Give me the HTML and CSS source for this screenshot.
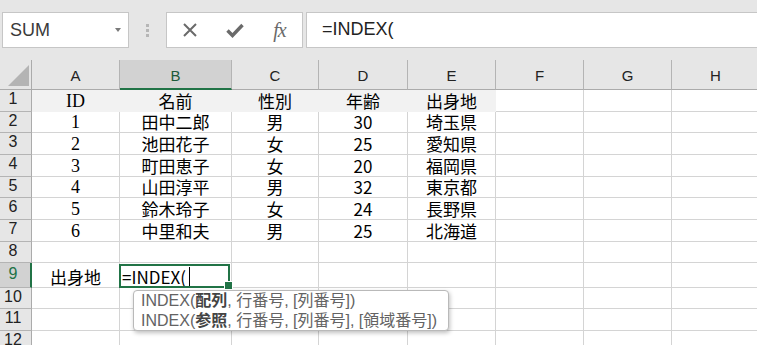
FILE: index.html
```html
<!DOCTYPE html>
<html lang="ja">
<head>
<meta charset="utf-8">
<link rel="stylesheet" href="styles.css">
</head>
<body>
<div class="toolbar">
  <div class="namebox"><span class="nb-text">SUM</span><span class="caret"></span></div>
  <div class="grip"><i></i><i></i><i></i></div>
  <div class="fbtns">
    <span class="fb"><svg width="16" height="16" viewBox="0 0 16 16"><path d="M2 2L14 14M14 2L2 14" stroke="#6a6a6a" stroke-width="2" fill="none"/></svg></span>
    <span class="fb"><svg width="18" height="16" viewBox="0 0 18 16"><path d="M1.5 8.5L6.5 13.5L16.5 3" stroke="#6a6a6a" stroke-width="3.4" fill="none"/></svg></span>
    <span class="fb fx">fx</span>
  </div>
  <div class="finput">=INDEX(</div>
</div>
<div class="sheet">
  <div class="corner"><svg width="32" height="30" viewBox="0 0 32 30"><path d="M29 5L29 26L8 26Z" fill="#b4b4b4"/></svg></div>
  <div class="ch">A</div><div class="ch sel">B</div><div class="ch">C</div><div class="ch">D</div><div class="ch">E</div><div class="ch">F</div><div class="ch">G</div><div class="ch">H</div>

  <div class="rh">1</div><div class="c hd lat">ID</div><div class="c hd">名前</div><div class="c hd">性別</div><div class="c hd">年齢</div><div class="c hd">出身地</div><div class="c"></div><div class="c"></div><div class="c"></div>
  <div class="rh">2</div><div class="c lat">1</div><div class="c">田中二郎</div><div class="c">男</div><div class="c">30</div><div class="c">埼玉県</div><div class="c"></div><div class="c"></div><div class="c"></div>
  <div class="rh">3</div><div class="c lat">2</div><div class="c">池田花子</div><div class="c">女</div><div class="c">25</div><div class="c">愛知県</div><div class="c"></div><div class="c"></div><div class="c"></div>
  <div class="rh">4</div><div class="c lat">3</div><div class="c">町田恵子</div><div class="c">女</div><div class="c">20</div><div class="c">福岡県</div><div class="c"></div><div class="c"></div><div class="c"></div>
  <div class="rh">5</div><div class="c lat">4</div><div class="c">山田淳平</div><div class="c">男</div><div class="c">32</div><div class="c">東京都</div><div class="c"></div><div class="c"></div><div class="c"></div>
  <div class="rh">6</div><div class="c lat">5</div><div class="c">鈴木玲子</div><div class="c">女</div><div class="c">24</div><div class="c">長野県</div><div class="c"></div><div class="c"></div><div class="c"></div>
  <div class="rh">7</div><div class="c lat">6</div><div class="c">中里和夫</div><div class="c">男</div><div class="c">25</div><div class="c">北海道</div><div class="c"></div><div class="c"></div><div class="c"></div>
  <div class="rh">8</div><div class="c"></div><div class="c"></div><div class="c"></div><div class="c"></div><div class="c"></div><div class="c"></div><div class="c"></div><div class="c"></div>
  <div class="rh sel">9</div><div class="c">出身地</div><div class="c active"><span class="edit">=INDEX(</span><span class="cursor"></span></div><div class="c"></div><div class="c"></div><div class="c"></div><div class="c"></div><div class="c"></div><div class="c"></div>
  <div class="rh">10</div><div class="c"></div><div class="c"></div><div class="c"></div><div class="c"></div><div class="c"></div><div class="c"></div><div class="c"></div><div class="c"></div>
  <div class="rh">11</div><div class="c"></div><div class="c"></div><div class="c"></div><div class="c"></div><div class="c"></div><div class="c"></div><div class="c"></div><div class="c"></div>
  <div class="rh">12</div><div class="c"></div><div class="c"></div><div class="c"></div><div class="c"></div><div class="c"></div><div class="c"></div><div class="c"></div><div class="c"></div>

  <div class="tip">
    <div class="tip-line">INDEX(<b>配列</b>, 行番号, [列番号])</div>
    <div class="tip-line">INDEX(<b>参照</b>, 行番号, [列番号], [領域番号])</div>
  </div>
</div>
</body>
</html>
```
FILE: styles.css
```css
* { box-sizing: border-box; margin: 0; padding: 0; }
html, body { margin: 0; }
body {
  width: 757px;
  height: 345px;
  overflow: hidden;
  background: #e6e6e6;
  font-family: "Liberation Sans", "Noto Sans CJK JP", sans-serif;
}

.toolbar {
  display: flex;
  align-items: flex-start;
  height: 60px;
  padding: 12px 0 0 2px;
}
.namebox {
  width: 127px;
  height: 36px;
  background: #fff;
  border: 1px solid #c6c6c6;
  display: flex;
  align-items: center;
  justify-content: space-between;
  padding: 0 7px 0 7px;
}
.nb-text { font-size: 18px; color: #3a3a3a; }
.caret {
  width: 0; height: 0;
  border-left: 3.5px solid transparent;
  border-right: 3.5px solid transparent;
  border-top: 4px solid #7a7a7a;
}
.grip {
  width: 37px;
  height: 36px;
  display: flex;
  flex-direction: column;
  align-items: center;
  justify-content: center;
  gap: 2px;
}
.grip i { display: block; width: 3px; height: 3px; background: #b6b6b6; }
.fbtns {
  width: 137px;
  height: 36px;
  background: #fff;
  border: 1px solid #c6c6c6;
  display: flex;
  align-items: center;
}
.fb {
  width: 45px;
  height: 34px;
  display: flex;
  align-items: center;
  justify-content: center;
}
.fx {
  font-family: "Liberation Serif", serif;
  font-style: italic;
  font-size: 20px;
  color: #6a6a6a;
  letter-spacing: -1px;
}
.finput {
  flex: 1;
  margin-left: 3px;
  height: 36px;
  background: #fff;
  border: 1px solid #c6c6c6;
  border-right: none;
  padding-left: 15px;
  font-size: 18px;
  line-height: 33px;
  color: #222;
}

.sheet {
  position: relative;
  display: grid;
  grid-template-columns: 32px 88px 112px 87px 89px 88px 88px 88px 88px;
  grid-template-rows: 30px 22px 21px 22px 22px 21px 22px 22px 21px 25px 21px 22px 22px;
  background: #fff;
  width: 760px;
}
.corner {
  background: #e6e6e6;
  border-right: 1px solid #ababab;
  border-bottom: 1px solid #ababab;
}
.corner svg { display: block; }
.ch {
  background: #e6e6e6;
  border-right: 1px solid #b4b4b4;
  border-bottom: 1px solid #ababab;
  display: flex;
  align-items: center;
  justify-content: center;
  padding-top: 2px;
  font-size: 15px;
  color: #222;
}
.ch.sel {
  background: #d2d2d2;
  border-bottom: 2px solid #217346;
  color: #1d5a3a;
}
.rh {
  background: #e6e6e6;
  border-right: 1px solid #ababab;
  border-bottom: 1px solid #b4b4b4;
  display: flex;
  align-items: center;
  justify-content: center;
  padding: 0 5px 3px 0;
  font-size: 16px;
  color: #222;
}
.rh.sel {
  background: #d2d2d2;
  border-right: 2px solid #217346;
  color: #217346;
  padding-right: 4px;
}
.c {
  border-right: 1px solid #d4d4d4;
  border-bottom: 1px solid #d4d4d4;
  display: flex;
  align-items: flex-end;
  justify-content: center;
  font-family: "Noto Sans CJK JP", sans-serif;
  font-size: 17px;
  line-height: 20px;
  color: #000;
  white-space: nowrap;
}
.c.hd {
  background: #f2f2f2;
  border-color: #f2f2f2;
}
.c.lat { font-family: "Liberation Serif", "Noto Sans CJK JP", serif; font-size: 18px; }
.c.active {
  position: relative;
  justify-content: flex-start;
  padding-left: 2px;
  align-items: flex-end;
}
.c.active::after {
  content: "";
  position: absolute;
  left: -1px;
  top: 1px;
  right: 1px;
  bottom: -1px;
  border: 2px solid #217346;
}
.c.active::before {
  content: "";
  position: absolute;
  right: -2px;
  bottom: -3px;
  width: 7px;
  height: 7px;
  background: #217346;
  border: 1px solid #fff;
  z-index: 2;
}
.edit { line-height: 20px; }
.cursor {
  display: block;
  width: 1px;
  height: 19px;
  background: #000;
  margin: 0 0 1px 3px;
}

.tip {
  position: absolute;
  left: 133px;
  top: 230px;
  width: 316px;
  height: 41px;
  background: #fff;
  border: 1px solid #b9b9b9;
  border-radius: 4px;
  box-shadow: 1px 2px 4px rgba(0,0,0,0.25);
  padding: 0 0 0 7px;
  z-index: 3;
}
.tip-line {
  font-family: "Liberation Sans", "Noto Sans CJK JP", sans-serif;
  font-size: 16px;
  line-height: 19.5px;
  color: #636363;
  white-space: nowrap;
}
.tip-line b { color: #444; font-weight: bold; }
```
